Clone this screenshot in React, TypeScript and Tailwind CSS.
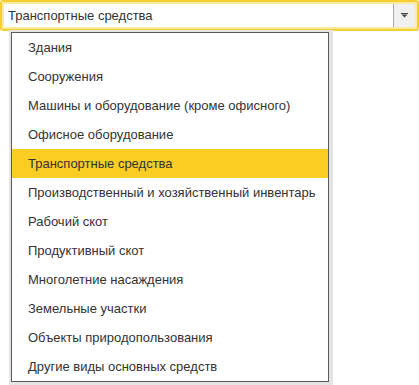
import React from 'react'

const items = [
  'Здания',
  'Сооружения',
  'Машины и оборудование (кроме офисного)',
  'Офисное оборудование',
  'Транспортные средства',
  'Производственный и хозяйственный инвентарь',
  'Рабочий скот',
  'Продуктивный скот',
  'Многолетние насаждения',
  'Земельные участки',
  'Объекты природопользования',
  'Другие виды основных средств',
]

export default function App() {
  const selected = 'Транспортные средства'

  return (
    <div className="relative w-[419px] h-[385px] bg-white font-['Liberation_Sans',Arial,sans-serif] text-[13px] text-[#333]">
      {/* поле выбора */}
      <div className="h-[31px] border-2 border-[#f5cf33] rounded-[3px]">
        <div className="h-full flex border-2 border-[#fcea9f] rounded-[2px] bg-white">
          <div className="flex-1 flex items-center pl-[4px] leading-none">{selected}</div>
          <div className="w-[22px] flex items-center justify-center bg-[#f0f0f0] border-l border-[#a8a8a8]">
            <svg width="7" height="5" viewBox="0 0 7 5">
              <rect x="0" y="0" width="7" height="1" fill="#444" />
              <path d="M0.5 1.5 H6.5 L3.5 4.5 Z" fill="#444" />
            </svg>
          </div>
        </div>
      </div>

      {/* выпадающий список */}
      <div className="absolute left-[11px] top-[32px] w-[318px] border border-[#5a5a5a] bg-white shadow-[1px_1px_0_3px_#e4e4e4]">
        {items.map((item) => (
          <div
            key={item}
            className={`h-[29px] flex items-center pl-4 ${item === selected ? 'bg-[#f9cd23]' : ''}`}
          >
            {item}
          </div>
        ))}
      </div>
    </div>
  )
}
